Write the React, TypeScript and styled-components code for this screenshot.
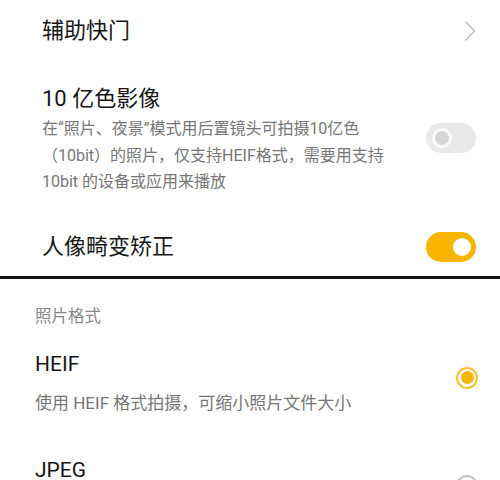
import React from 'react'
import styled, { createGlobalStyle } from 'styled-components'

const GlobalStyle = createGlobalStyle`
  html, body {
    margin: 0;
    padding: 0;
    background: #ffffff;
    overflow: hidden;
  }
  body {
    font-family: Roboto, 'Noto Sans CJK SC', sans-serif;
    color: #1a1a1a;
  }
`

const Page = styled.div`
  width: 500px;
  height: 480px;
  overflow: hidden;
  background: #ffffff;
`

const TopSection = styled.div`
  display: flex;
  flex-direction: column;
  padding: 0 24px 0 42px;
`

const NavRow = styled.div`
  display: flex;
  align-items: center;
  justify-content: space-between;
  height: 62px;
`

const SwitchRow = styled.div<{ $top: number; $bottom: number }>`
  display: flex;
  align-items: center;
  justify-content: space-between;
  gap: 20px;
  padding-top: ${({ $top }) => $top}px;
  padding-bottom: ${({ $bottom }) => $bottom}px;
`

const TextBlock = styled.div`
  flex: 1;
  min-width: 0;
`

const Title = styled.div`
  font-size: 22px;
  line-height: 30px;
  color: #161616;
`

const Description = styled.div`
  margin-top: 2px;
  font-size: 16px;
  line-height: 26.5px;
  color: #767676;
`

const Chevron = styled.svg`
  width: 12px;
  height: 22px;
`

const Track = styled.div<{ $on: boolean }>`
  position: relative;
  flex-shrink: 0;
  width: 50px;
  height: 30px;
  border-radius: 15px;
  background: ${({ $on }) => ($on ? '#f7b500' : '#e9e9e9')};
  margin-top: ${({ $on }) => ($on ? '0' : '-3px')};
`

const Knob = styled.div<{ $on: boolean }>`
  position: absolute;
  top: 50%;
  left: ${({ $on }) => ($on ? '27px' : '6px')};
  width: ${({ $on }) => ($on ? '18px' : '14px')};
  height: ${({ $on }) => ($on ? '18px' : '14px')};
  transform: translateY(-50%);
  border-radius: 50%;
  background: ${({ $on }) => ($on ? '#ffffff' : '#d6d6d6')};
  border: ${({ $on }) => ($on ? 'none' : '3px solid #fafafa')};
`

const Divider = styled.div`
  height: 3px;
  background: #111111;
`

const BottomSection = styled.div`
  display: flex;
  flex-direction: column;
  padding: 26px 22px 0 35px;
`

const SectionLabel = styled.div`
  font-size: 16.5px;
  line-height: 24px;
  color: #888888;
`

const Option = styled.div<{ $top: number }>`
  display: flex;
  align-items: flex-start;
  justify-content: space-between;
  gap: 20px;
  margin-top: ${({ $top }) => $top}px;
`

const OptionTitle = styled.div`
  font-size: 21px;
  line-height: 30px;
  color: #161616;
`

const OptionDesc = styled.div`
  margin-top: 11px;
  font-size: 17px;
  line-height: 26px;
  color: #767676;
`

const Radio = styled.div<{ $checked: boolean; $offset: number }>`
  flex-shrink: 0;
  box-sizing: border-box;
  width: 22px;
  height: 22px;
  margin-top: ${({ $offset }) => $offset}px;
  border-radius: 50%;
  border: 2px solid ${({ $checked }) => ($checked ? '#f7c234' : '#c4c4c4')};
  display: flex;
  align-items: center;
  justify-content: center;

  &::after {
    content: '';
    display: ${({ $checked }) => ($checked ? 'block' : 'none')};
    width: 13px;
    height: 13px;
    border-radius: 50%;
    background: #f7b500;
  }
`

const Toggle = ({ on }: { on: boolean }) => (
  <Track $on={on}>
    <Knob $on={on} />
  </Track>
)

export default function App() {
  return (
    <Page>
      <GlobalStyle />
      <TopSection>
        <NavRow>
          <Title>辅助快门</Title>
          <Chevron viewBox="0 0 12 22">
            <path d="M1.5 1.5 L10.5 11 L1.5 20.5" fill="none" stroke="#bdbdbd" strokeWidth="1.4" />
          </Chevron>
        </NavRow>
        <SwitchRow $top={22} $bottom={0}>
          <TextBlock>
            <Title>10 亿色影像</Title>
            <Description>
              在“照片、夜景”模式用后置镜头可拍摄10亿色（10bit）的照片，仅支持HEIF格式，需要用支持10bit 的设备或应用来播放
            </Description>
          </TextBlock>
          <Toggle on={false} />
        </SwitchRow>
        <SwitchRow $top={36} $bottom={14}>
          <Title>人像畸变矫正</Title>
          <Toggle on />
        </SwitchRow>
      </TopSection>
      <Divider />
      <BottomSection>
        <SectionLabel>照片格式</SectionLabel>
        <Option $top={20}>
          <TextBlock>
            <OptionTitle>HEIF</OptionTitle>
            <OptionDesc>使用 HEIF 格式拍摄，可缩小照片文件大小</OptionDesc>
          </TextBlock>
          <Radio $checked $offset={18} />
        </Option>
        <Option $top={39}>
          <TextBlock>
            <OptionTitle>JPEG</OptionTitle>
          </TextBlock>
          <Radio $checked={false} $offset={20} />
        </Option>
      </BottomSection>
    </Page>
  )
}
